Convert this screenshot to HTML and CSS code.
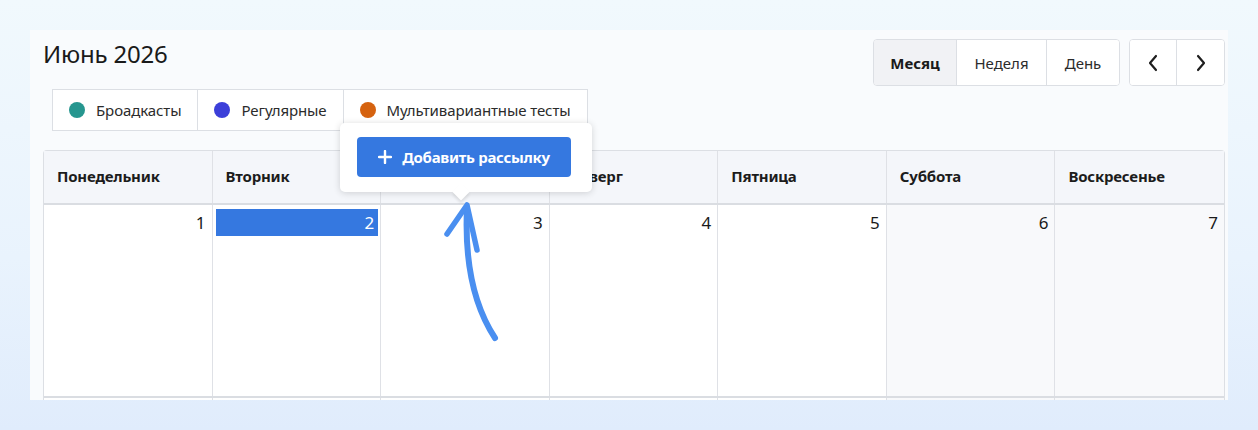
FILE: index.html
```html
<!DOCTYPE html>
<html lang="ru">
<head>
<meta charset="utf-8">
<title>Календарь рассылок</title>
<link rel="stylesheet" href="styles.css">
</head>
<body>
<div class="card">
  <div class="toolbar">
    <div class="toolbar-left">
      <h1 class="title">Июнь 2026</h1>
      <div class="legend">
        <div class="legend-item"><span class="dot dot-teal"></span>Броадкасты</div>
        <div class="legend-item"><span class="dot dot-blue"></span>Регулярные</div>
        <div class="legend-item"><span class="dot dot-orange"></span>Мультивариантные тесты</div>
      </div>
    </div>
    <div class="controls">
      <div class="seg">
        <button class="seg-btn active w-month">Месяц</button>
        <button class="seg-btn w-week">Неделя</button>
        <button class="seg-btn w-day">День</button>
      </div>
      <div class="seg">
        <button class="seg-btn nav-btn"><svg width="12" height="18" viewBox="0 0 12 18"><path d="M9 2 L3 9 L9 16" fill="none" stroke="#1f1f1f" stroke-width="2.2" stroke-linecap="round" stroke-linejoin="round"/></svg></button>
        <button class="seg-btn nav-btn"><svg width="12" height="18" viewBox="0 0 12 18"><path d="M3 2 L9 9 L3 16" fill="none" stroke="#1f1f1f" stroke-width="2.2" stroke-linecap="round" stroke-linejoin="round"/></svg></button>
      </div>
    </div>
  </div>

  <div class="calendar">
    <div class="head">
      <div class="hcell">Понедельник</div>
      <div class="hcell">Вторник</div>
      <div class="hcell">Среда</div>
      <div class="hcell">Четверг</div>
      <div class="hcell">Пятница</div>
      <div class="hcell">Суббота</div>
      <div class="hcell last">Воскресенье</div>
    </div>
    <div class="week">
      <div class="cell"><div class="num">1</div></div>
      <div class="cell"><div class="num selected">2</div></div>
      <div class="cell"><div class="num">3</div></div>
      <div class="cell"><div class="num">4</div></div>
      <div class="cell"><div class="num">5</div></div>
      <div class="cell weekend"><div class="num">6</div></div>
      <div class="cell weekend last"><div class="num">7</div></div>
    </div>
    <div class="week">
      <div class="cell"></div>
      <div class="cell"></div>
      <div class="cell"></div>
      <div class="cell"></div>
      <div class="cell"></div>
      <div class="cell weekend"></div>
      <div class="cell weekend last"></div>
    </div>
  </div>

  <div class="popup">
    <button class="add-btn"><svg class="plus" width="14" height="14" viewBox="0 0 14 14"><path d="M7 1 V13 M1 7 H13" stroke="#fff" stroke-width="2.4" stroke-linecap="round"/></svg>Добавить рассылку</button>
    <span class="caret"></span>
  </div>

  <svg class="hint-arrow" width="80" height="160" viewBox="0 0 80 160">
    <path d="M65 146 C48 120 34 80 37 16" fill="none" stroke="#4a8ff0" stroke-width="6" stroke-linecap="round"/>
    <path d="M17 42 L37 13 L47 58" fill="none" stroke="#4a8ff0" stroke-width="5.5" stroke-linecap="round" stroke-linejoin="round"/>
  </svg>
</div>
</body>
</html>
```

FILE: styles.css
```css
* { box-sizing: border-box; }

html, body { height: 100%; }

body {
  margin: 0;
  font-family: "Noto Sans", "Open Sans", sans-serif;
  color: #222;
  background: linear-gradient(180deg, #f1f9fd 0%, #e9f3fd 60%, #e0ecfc 100%);
  overflow: hidden;
}

.card {
  position: relative;
  margin: 30px 0 0 30px;
  width: 1198px;
  height: 370px;
  background: #f9fbfd;
  padding: 9px 3px 0 13px;
  overflow: hidden;
}

.toolbar {
  display: flex;
  justify-content: space-between;
  align-items: flex-start;
}

.title {
  margin: 0;
  font-size: 24px;
  font-weight: 400;
  line-height: 30px;
  color: #1a1a1a;
  letter-spacing: -0.2px;
}

.legend {
  display: flex;
  margin: 20px 0 0 9px;
  background: #fff;
  border: 1px solid #dcdfe4;
  height: 42px;
}

.legend-item {
  display: flex;
  align-items: center;
  padding: 0 16px;
  font-size: 15px;
  letter-spacing: -0.1px;
  color: #2b2b2b;
  border-right: 1px solid #dcdfe4;
}
.legend-item:last-child { border-right: none; }

.dot {
  width: 16px;
  height: 16px;
  border-radius: 50%;
  margin-right: 11px;
  flex: none;
}
.dot-teal { background: #26968f; }
.dot-blue { background: #3c3fd9; }
.dot-orange { background: #d5620f; }

.controls {
  display: flex;
  gap: 9px;
}

.seg {
  display: flex;
  border: 1px solid #dcdfe4;
  border-radius: 4px;
  background: #fff;
  overflow: hidden;
  height: 47px;
}

.seg-btn {
  font-family: inherit;
  font-size: 15px;
  color: #2b2b2b;
  background: #fff;
  border: none;
  border-right: 1px solid #dcdfe4;
  padding: 0;
  display: flex;
  align-items: center;
  justify-content: center;
  cursor: pointer;
}
.seg-btn:last-child { border-right: none; }
.seg-btn.active { background: #f1f2f5; font-weight: 700; color: #1a1a1a; }
.w-month { width: 83px; }
.w-week { width: 90px; }
.w-day { width: 72px; }
.nav-btn { width: 47px; }

.calendar {
  margin-top: 19px;
  width: 1182px;
  border: 1px solid #dcdfe4;
  border-bottom: none;
  border-radius: 4px 4px 0 0;
  background: #fff;
}

.head {
  display: grid;
  grid-template-columns: repeat(7, 1fr);
  background: #f4f6fa;
  border-bottom: 2px solid #dadde2;
  height: 54px;
}

.hcell {
  display: flex;
  align-items: center;
  padding: 0 12px 2px 13px;
  font-size: 15px;
  font-weight: 700;
  letter-spacing: -0.2px;
  color: #1c1c1c;
  border-right: 1px solid #dfe1e6;
}
.hcell.last, .cell.last { border-right: none; }

.week {
  display: grid;
  grid-template-columns: repeat(7, 1fr);
  height: 193px;
  border-bottom: 2px solid #dadde2;
}

.cell {
  border-right: 1px solid #dfe1e6;
  background: #fff;
}
.cell.weekend { background: #f8f9fb; }

.num {
  margin: 4px 2px 0 3px;
  padding: 0 4px;
  height: 27px;
  line-height: 27px;
  text-align: right;
  font-size: 17px;
  color: #1a1a1a;
}
.num.selected {
  background: #3578e0;
  color: #fff;
}

.popup {
  position: absolute;
  left: 310px;
  top: 93px;
  width: 252px;
  height: 69px;
  background: #fff;
  border-radius: 5px;
  box-shadow: 0 1px 7px rgba(0, 0, 0, 0.16);
  padding: 14px 0 0 17px;
}

.add-btn {
  display: flex;
  align-items: center;
  justify-content: center;
  gap: 10px;
  width: 214px;
  height: 40px;
  border: none;
  border-radius: 4px;
  background: #3578e0;
  color: #fff;
  font-family: inherit;
  font-size: 15px;
  font-weight: 700;
  letter-spacing: -0.3px;
  padding: 0 0 1px;
  cursor: pointer;
}

.caret {
  position: absolute;
  left: 115px;
  bottom: -6px;
  width: 12px;
  height: 12px;
  background: #fff;
  transform: rotate(45deg);
  box-shadow: 2px 2px 3px rgba(0, 0, 0, 0.1);
}

.hint-arrow {
  position: absolute;
  left: 400px;
  top: 162px;
}
```
